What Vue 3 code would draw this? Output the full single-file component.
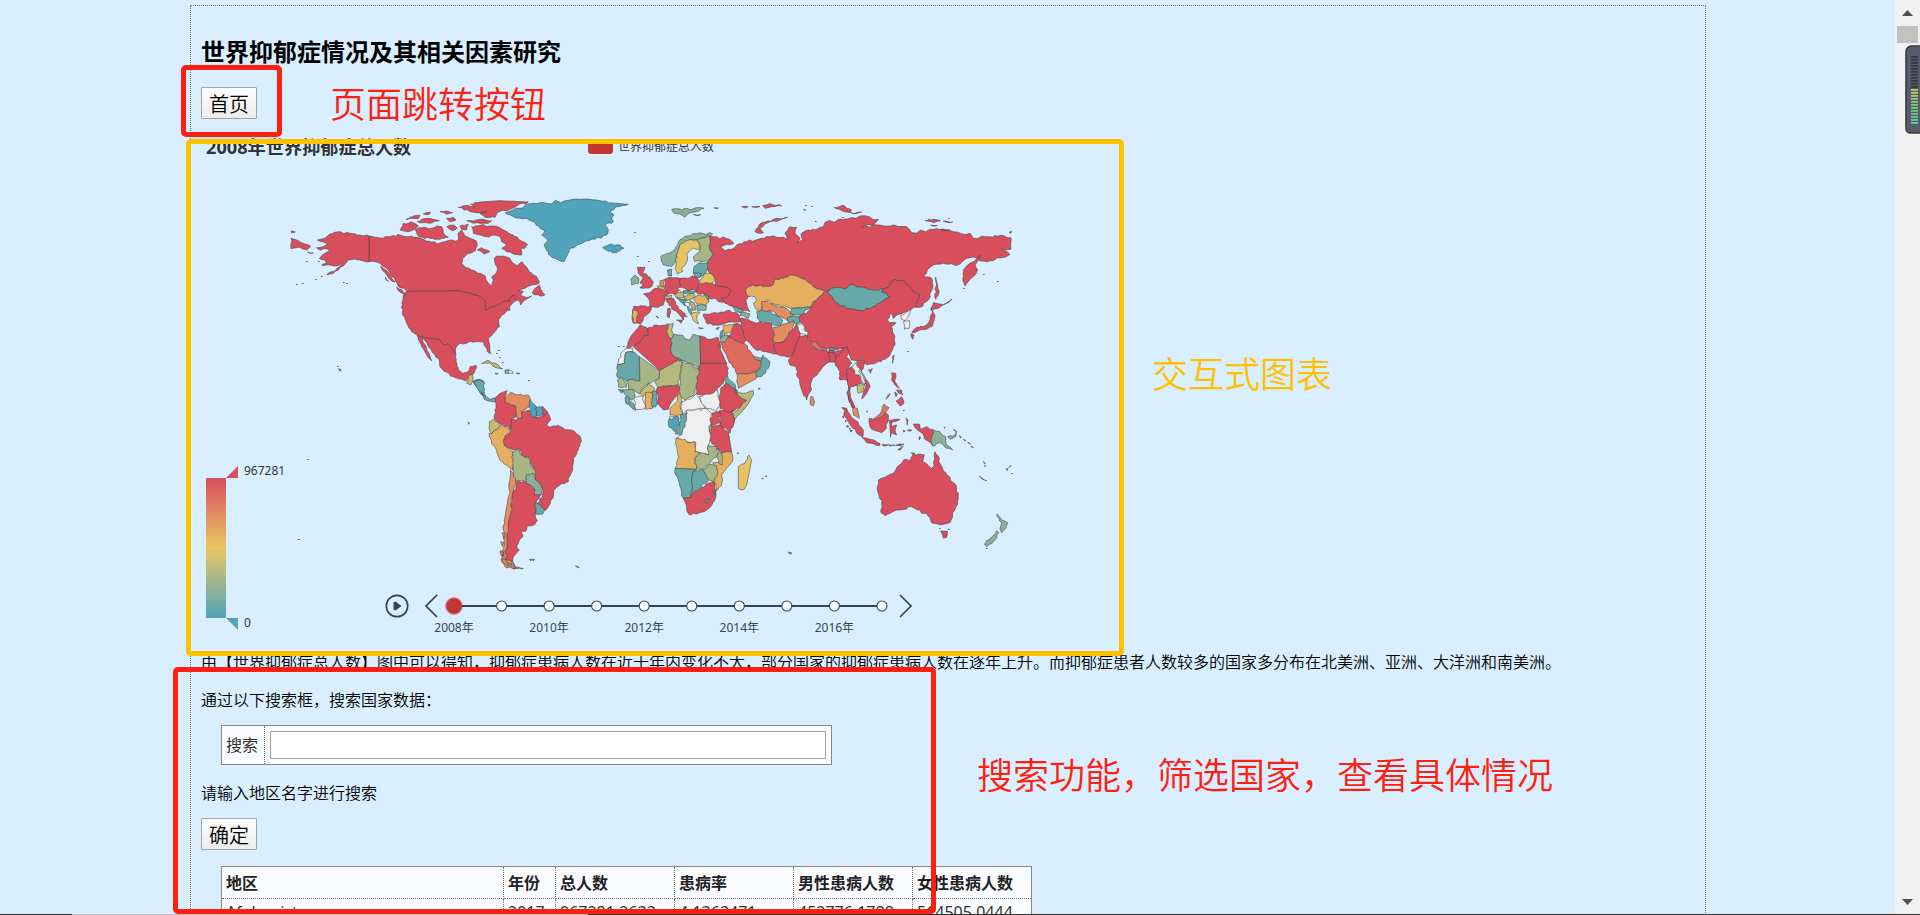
<script setup>
const R = '#d94e5d'
const T = '#50a3ba'
const W = '#eeeeee'
const OR = '#e28e5e'
const AM = '#e6ae5f'
const YE = '#e5c464'
const OL = '#c6bc70'
const SG = '#a8b685'
const GR = '#8bb099'
const TE = '#67a8a9'

// Each sheet has its own origin; coordinates are in thirds of a pixel.
const sheets = [
  { x: 280, y: 180, shapes: [
    [R, '267,168 300,174 335,168 360,165 378,170 395,168 420,175 440,184 465,185 470,192 490,186 510,180 528,184 536,178 534,160 545,150 555,168 570,175 588,182 592,196 586,212 575,218 560,222 548,235 545,250 556,262 575,270 600,280 616,288 622,305 635,318 640,300 635,290 650,278 652,262 645,250 643,235 650,228 670,228 690,235 700,250 712,258 726,245 740,262 748,275 770,290 778,305 775,312 755,315 735,325 715,332 730,334 722,345 745,352 755,348 735,360 722,375 718,362 705,358 704,348 695,347 688,362 668,366 655,374 640,380 618,391 614,360 600,350 575,342 545,333 380,334 372,325 355,320 345,300 330,278 315,262 300,250 285,245 267,245'],
    [R, '267,168 240,165 210,160 175,155 150,162 135,175 112,180 130,186 145,192 130,200 110,203 115,208 145,208 148,215 125,228 118,235 135,240 140,250 125,255 150,255 170,258 185,250 168,270 140,285 160,280 190,258 205,240 222,237 240,240 267,245'],
    [R, '380,334 545,333 575,342 600,350 614,360 618,391 640,380 655,374 668,366 688,362 695,347 704,348 708,362 690,378 690,390 665,405 655,420 658,440 640,460 625,475 628,490 632,522 622,515 612,488 598,485 580,487 570,484 560,490 540,490 528,502 527,520 515,505 505,492 492,495 478,478 455,475 430,472 412,466 395,455 380,430 368,405 367,375 370,345'],
    [R, '412,466 430,472 455,475 478,478 492,495 505,492 515,505 527,520 528,545 535,570 548,580 565,575 570,560 588,556 590,562 582,580 575,584 565,590 560,602 545,598 520,590 490,572 480,560 478,540 460,520 445,500 435,482 428,475 440,510 455,542 440,525 425,500 415,480'],
    [OL, '560,610 568,585 578,584 578,600 572,615'],
    [TE, '578,604 600,598 612,605 608,640 618,655 600,640 590,620'],
    [R, '575,140 600,136 640,138 670,150 700,165 720,180 743,193 735,205 722,205 725,225 700,222 680,215 665,205 680,195 665,185 660,170 640,165 625,172 600,165 580,160'],
    [R, '405,148 430,142 455,145 470,138 485,140 490,160 505,172 480,178 450,175 420,172 410,160'],
    [R, '360,150 370,130 400,128 415,138 400,150 380,155'],
    [R, '535,82 560,76 585,82 572,72 600,66 660,62 745,66 710,78 690,88 650,100 645,112 615,112 600,100 620,95 590,98 570,95'],
    [R, '560,122 600,118 635,122 625,130 580,130'],
    [R, '378,118 400,108 420,106 415,116'],
    [R, '412,125 440,115 460,118 478,122 450,130'],
    [R, '480,95 500,93 518,98 500,103'],
    [R, '430,102 452,97 448,103'],
    [R, '500,140 520,135 532,145 518,152'],
    [R, '540,138 565,133 560,150 545,148'],
    [R, '500,115 520,112 528,120 510,125'],
    [R, '592,210 605,203 630,215 612,222'],
    [R, '757,340 765,325 778,315 782,328 795,345 780,348'],
    [R, '33,175 55,182 75,192 92,198 80,210 55,202 33,206'],
    [R, '33,153 46,156 35,159'],
    [T, '676,98 720,85 745,72 800,70 855,62 900,58 950,60 985,68 1045,73 1010,80 990,95 1002,105 995,115 1000,125 975,135 985,150 980,165 945,178 920,182 900,192 870,205 862,225 852,245 835,240 815,232 800,212 792,195 805,180 785,165 795,152 780,145 760,125 740,115 700,110'],
    [T, '968,203 985,195 1020,195 1032,205 1010,218 985,214'],
    [OL, '605,550 620,542 645,550 668,566 645,562 630,548'],
    [GR, '675,570 686,569 686,580 675,580'],
    [W, '686,569 699,576 698,581 686,580'],
    [R, '302,258 318,270 330,285 345,305 338,305 322,288 308,272'],
    [R, '316,292 326,304 318,300'], [R, '350,322 366,330 378,346 362,338'],
    [R, '82,216 100,219 90,220'], [R, '176,566 184,570 179,574'],
    [TE, '645,580 655,580 650,583'], [TE, '709,579 720,580 712,583'],
  ] },
  { x: 450, y: 370, shapes: [
    [TE, '72,35 88,30 104,38 102,65 108,80 92,66 78,48'],
    [TE, '94,66 108,80 122,88 136,84 138,95 120,94 103,88'],
    [R, '135,85 150,70 172,62 165,85 170,100 197,108 200,140 183,148 185,178 160,165 135,150 132,140 138,115'],
    [OR, '165,85 180,68 205,74 235,75 242,92 238,110 215,125 215,145 203,147 198,125 197,108 170,100'],
    [R, '183,148 200,150 203,147 215,145 215,125 238,120 245,140 262,142 280,138 292,125 302,150 290,165 300,172 325,165 345,180 370,182 390,198 394,215 385,240 370,265 368,300 355,335 330,345 312,360 310,380 298,405 285,422 262,400 278,375 275,350 258,335 255,300 240,280 238,265 215,255 208,235 188,240 165,228 160,210 165,198 180,190 185,178'],
    [T, '240,90 255,105 262,120 258,142 245,140 238,112'],
    [T, '258,112 278,110 278,135 262,138'],
    [R, '278,110 292,125 280,138'],
    [OL, '118,155 130,148 152,160 148,172 125,192 117,175'],
    [AM, '117,190 125,192 148,172 155,165 180,178 180,190 165,198 160,210 165,228 182,240 190,250 188,300 170,285 150,270 140,240 118,200'],
    [SG, '188,245 208,237 212,255 240,268 240,285 256,300 256,315 230,315 228,330 195,335 190,310'],
    [R, '200,335 228,335 255,358 253,374 275,372 258,398 255,432 262,452 255,463 232,468 228,484 214,484 220,498 208,510 200,530 208,540 190,560 188,575 165,570 172,520 175,470 182,430 185,380'],
    [GR, '230,315 250,310 256,330 275,350 272,375 253,374 255,358 230,340'],
    [TE, '258,398 283,418 278,432 255,432'],
    [OR, '181,300 190,310 198,340 186,380 182,430 175,470 172,520 165,570 158,558 162,510 160,480 165,440 175,380 180,330'],
    [OR, '158,545 165,570 185,572 192,598 165,590 155,575'],
    [OR, '156,488 166,490 163,505'], [OR, '152,515 162,518 158,530'], [OR, '150,542 160,545 156,560'],
    [OR, '155,565 170,572 175,588 160,578'], [OR, '172,578 185,582 183,590'],
    [R, '188,575 196,590 210,594 192,596'],
    [GR, '238,568 246,568 243,573'], [GR, '247,567 254,569 249,573'], [GR, '376,588 388,592 383,593'],
    [OL, '54,156 59,159 56,163'], [GR, '210,594 220,595 213,597'],
  ] },
  { x: 600, y: 190, shapes: [
    [R, '330,138 350,140 390,148 402,160 375,165 362,170 375,182 395,178 410,165 440,155 475,148 510,140 550,142 562,148 555,130 570,110 590,112 585,130 600,145 590,160 608,150 603,132 625,120 650,118 670,110 675,97 730,88 780,78 835,88 825,100 785,113 835,105 870,108 920,110 935,128 990,118 1030,117 1060,125 1110,130 1120,145 1170,140 1200,136 1233,143 1233,178 1205,178 1230,193 1180,212 1140,213 1128,203 1100,205 1080,222 1030,220 1000,225 970,258 995,265 998,295 985,330 960,352 945,352 960,315 940,305 915,275 885,268 865,292 850,297 820,302 790,292 750,283 740,295 710,292 680,303 660,298 640,290 615,268 575,255 550,265 525,268 520,285 490,290 460,285 436,298 445,320 438,330 450,365 425,358 400,350 375,340 365,325 393,300 370,290 345,285 345,265 330,250 322,235 322,215 340,195 330,180'],
    [GR, '182,200 205,190 225,178 235,155 260,138 300,128 338,132 325,142 295,150 270,150 245,165 232,190 228,215 215,230 190,225'],
    [YE, '228,215 232,190 240,165 262,152 290,148 300,165 300,178 280,175 260,190 262,212 245,235 248,245 232,252 225,235'],
    [SG, '290,150 325,135 330,180 340,195 320,212 285,215 280,200 300,180 300,165'],
    [YE, '300,270 315,250 335,252 345,270 335,280 300,282'],
    [TE, '282,230 295,220 322,218 322,240 315,250 300,262 280,250'],
    [TE, '280,248 305,250 300,262 286,262'],
    [R, '290,290 310,280 345,285 370,290 393,300 385,318 365,325 375,335 355,335 345,325 325,325 320,312 295,312 285,300'],
    [R, '240,265 290,262 298,275 290,302 260,300 240,290'],
    [R, '195,268 210,262 240,265 240,290 230,310 205,312 193,295'],
    [TE, '202,240 215,238 215,258 205,258'],
    [R, '130,312 150,308 165,295 178,292 193,300 205,312 195,325 190,345 175,352 150,350 148,330'],
    [YE, '172,288 190,292 186,300'], [OR, '180,272 194,268 192,290 180,286'],
    [W, '228,292 245,292 262,300 245,308'],
    [OL, '195,318 215,315 212,328 193,326'],
    [OL, '222,310 250,306 252,322 228,322'],
    [TE, '250,302 288,304 280,312 254,312'],
    [OL, '252,318 280,310 286,320 270,330 254,328'],
    [AM, '278,325 295,315 320,318 328,335 315,345 290,342'],
    [TE, '312,312 325,318 326,330'],
    [GR, '290,345 320,345 318,360 293,362'],
    [SG, '270,332 282,338 288,360 276,362'],
    [W, '250,336 268,338 266,352 252,346'],
    [T, '230,323 252,328 262,332 250,334 256,346 240,334'],
    [TE, '262,350 272,356 275,375 268,368'],
    [YE, '272,372 300,366 290,378 295,402 280,392'],
    [R, '197,328 220,325 228,345 245,362 262,380 252,378 250,390 245,382 220,360 205,340'],
    [R, '230,390 248,390 243,400'], [R, '203,356 210,355 209,382 203,382'],
    [R, '102,348 130,348 155,352 152,362 135,378 122,402 100,400 98,360'],
    [AM, '98,360 112,362 110,398 98,396'],
    [R, '310,372 345,368 380,362 415,372 422,395 375,400 345,405 318,398'],
    [TE, '398,350 430,360 426,370 405,362'], [GR, '426,366 450,372 445,385 420,376'],
    [R, '112,232 135,232 128,248 150,262 160,275 155,290 120,294 132,285 120,278 130,262 115,250'],
    [GR, '92,268 105,255 117,265 115,280 95,285'],
    [AM, '436,298 460,285 490,290 520,285 525,268 550,265 575,255 615,268 640,290 660,298 675,305 655,325 640,335 635,350 580,355 560,350 530,345 500,330 487,340 485,362 470,360 460,340 470,330 465,320 445,320'],
    [TE, '680,303 710,292 740,295 750,283 790,292 820,302 850,297 845,305 872,320 845,335 820,350 780,362 740,355 705,335 695,318'],
    [R, '675,305 680,303 695,318 705,335 740,355 780,362 820,350 845,335 872,320 845,305 850,297 865,292 885,268 915,275 940,305 960,315 945,350 930,358 905,372 890,375 880,385 875,370 860,390 870,398 888,398 873,410 885,440 885,465 872,490 855,508 830,518 815,522 800,525 790,512 770,512 755,510 745,480 740,470 710,480 685,475 660,475 635,455 620,435 615,410 597,392 600,375 620,370 635,350 640,335 655,325'],
    [R, '92,440 105,425 120,405 142,415 145,435 105,465 80,473'],
    [R, '145,435 142,415 170,405 203,402 205,430 215,450 215,490 245,510 180,542 100,470 105,465'],
    [OL, '203,402 220,400 215,420 222,435 212,448 202,430'],
    [GR, '222,432 240,435 270,450 280,432 300,438 302,535 245,510 215,490 212,450'],
    [R, '300,438 330,448 355,443 362,475 355,465 380,520 302,520'],
    [W, '52,525 62,490 80,475 98,475 98,485 78,487 75,520'],
    [TE, '52,525 75,520 78,487 98,485 118,500 120,572 80,572 65,565 52,562'],
    [SG, '118,500 178,542 178,565 150,580 130,590 120,612 100,600 85,598 80,572 120,572'],
    ['#b5b97c', '178,542 235,510 247,520 240,560 235,585 205,588 175,592 165,575 178,565'],
    [SG, '245,510 298,535 295,570 285,610 255,630 238,615 240,560'],
    [R, '302,520 380,520 385,550 370,580 350,600 335,610 290,612 292,575'],
    ['#dd6a5c', '363,455 385,440 405,450 435,462 455,490 465,505 482,510 480,535 450,550 412,555 405,535 385,510 370,480'],
    [OR, '412,555 450,550 468,545 470,565 415,595'],
    [TE, '485,505 492,500 510,515 505,535 485,560 470,560 468,545 482,535'],
    [GR, '460,500 482,505 490,495 484,512 466,508'],
    [R, '403,402 418,402 440,445 430,460 405,450 385,440 395,425'],
    [AM, '372,405 403,402 395,425 372,435'],
    [GR, '362,440 385,435 375,455 362,458'], [TE, '362,425 368,420 366,440 360,445'],
    [R, '418,385 430,385 450,392 470,400 480,395 515,398 522,430 520,455 530,492 495,485 465,478 450,460 435,445 425,415'],
    [TE, '470,365 490,358 510,362 548,390 540,410 515,400 480,395 472,385'],
    [OR, '485,335 505,335 535,350 560,355 575,372 590,368 562,392 540,380 510,362 487,362'],
    [TE, '575,355 635,352 600,375 570,372'], [TE, '562,384 595,378 600,398 565,398'],
    [OR, '520,412 550,402 565,398 582,392 578,420 550,455 522,458'],
    [R, '522,460 550,455 578,420 590,400 600,430 600,455 585,480 575,500 530,492'],
    [R, '600,440 620,435 632,455 635,465 650,478 685,485 690,475 705,485 740,472 735,485 720,500 705,515 690,515 675,525 655,548 635,572 632,605 620,630 605,600 592,560 588,530 570,525 565,510 575,500 585,480'],
    [W, '590,405 605,402 614,412 612,420 625,425 622,437 600,430'],
    ['#dd765c', '635,455 680,475 680,485 650,478'],
    [T, '688,473 705,474 703,482 688,482'],
    [OR, '632,620 638,620 644,636 640,647 632,645'],
    [R, '465,125 485,98 520,88 563,82 540,90 500,100 480,115 490,128 475,130'],
    [GR, '215,58 245,60 260,55 312,55 290,65 270,68 255,82 240,72 220,68'],
    [GR, '280,73 302,74 290,77'], [R, '342,53 355,54 348,56'],
    [R, '425,50 445,50 436,54'], [R, '455,50 480,49 470,53'], [R, '488,46 510,41 545,48 515,50 495,55'],
    [TE, '348,415 358,412 352,420'], [GR, '295,413 310,415 300,417'],
    [R, '475,595 481,596 476,598'],
  ] },
  { x: 600, y: 360, shapes: [
    [SG, '52,60 65,52 80,70 80,82 55,80'], [T, '55,88 72,90 64,100'],
    [GR, '68,90 100,88 105,110 95,120 80,110'],
    [TE, '75,112 84,108 90,120 84,134 76,128'], [TE, '85,130 92,124 106,140 107,151 96,145'],
    [W, '105,110 130,108 135,145 108,148'],
    [OL, '120,100 145,68 165,88 155,98 130,108'],
    [AM, '136,98 155,97 157,145 137,148'],
    [TE, '157,95 172,92 168,140 158,142'],
    [R, '172,82 205,78 235,76 240,90 220,120 205,148 190,150 172,132'],
    [AM, '240,98 245,115 240,135 248,165 210,165 210,145 225,130'],
    [W, '245,125 270,118 290,100 310,130 315,145 285,150 262,150 248,162 243,140'],
    [W, '298,110 330,103 352,90 360,130 350,155 320,145 305,130'],
    [R, '362,85 378,68 410,90 415,108 440,122 420,145 385,158 360,145 358,120'],
    [TE, '374,60 382,45 408,85 400,85 378,68'],
    ['#b5b97c', '410,95 430,100 460,92 460,105 430,150 400,195 400,160 440,122 415,108'],
    [R, '360,150 385,158 400,150 400,195 390,220 360,195'],
    [R, '335,160 358,155 362,190 332,195'],
    [R, '333,198 360,195 385,215 395,275 365,278 345,260 330,240'],
    [W, '262,150 285,150 320,146 335,160 330,200 330,240 325,255 325,285 300,278 285,275 285,245 255,245 228,235 245,220 255,180'],
    [SG, '327,198 336,196 334,218 328,216'],
    [T, '208,175 235,170 240,195 225,215 205,195'], [W, '209,170 220,170 220,177 209,177'],
    [TE, '240,165 262,158 255,190 245,225 226,222 240,200'],
    [AM, '228,235 255,238 262,248 283,245 285,275 300,278 285,295 290,328 225,325 235,290'],
    [SG, '285,292 305,278 325,285 325,255 352,260 350,290 325,315 310,328 290,325'],
    [AM, '362,278 395,275 397,305 365,345 365,375 348,392 345,360 352,325 338,308 365,305'],
    [SG, '352,265 360,275 368,315 358,312'],
    [SG, '308,330 330,312 350,318 350,350 340,365 320,358'],
    [TE, '225,325 290,328 280,335 275,365 272,412 250,415 240,380'],
    [TE, '280,335 305,328 325,362 300,385 275,400 275,365'],
    [R, '250,415 272,412 275,400 300,388 325,370 342,365 348,395 345,420 320,450 295,460 268,465 260,450'],
    [T, '317,420 325,415 328,423 320,430'], [T, '338,395 347,394 345,404'],
    [YE, '447,285 455,300 440,375 430,390 415,385 415,320 435,310'],
    [TE, '404,90 412,92 408,102'], [TE, '564,576 576,579 570,583'],
    [R, '485,355 489,355 487,358'], [R, '497,347 500,348 498,351'], [R, '412,278 416,280 413,282'],
  ] },
  { x: 800, y: 190, shapes: [
    [R, '102,52 130,46 140,55 155,60 150,67 125,62'], [R, '150,67 185,66 165,72'],
    [R, '375,92 400,88 422,92 400,98'], [R, '430,93 458,96 440,97'], [R, '392,105 412,107 400,109'],
    [R, '627,127 634,124 633,130'], [R, '10,59 18,60 14,61'], [R, '420,118 445,121 432,123'],
    [R, '490,240 500,228 520,215 540,195 535,210 525,225 533,240 520,260 505,275 495,288 488,265'],
    [R, '407,262 413,285 418,305 408,328 404,320 408,290'],
    [R, '400,338 430,345 415,355 393,362'],
    [R, '398,362 405,375 398,408 380,418 350,425 335,430 350,412 375,408 390,390'],
    [R, '332,432 342,435 338,448'],
    [R, '430,344 445,335 456,327 446,338'],
    [W, '302,378 335,355 328,372 315,392 305,388'], [W, '312,392 328,392 328,415 313,418'],
    [R, '277,500 283,495 278,520'], [R, '205,540 217,536 212,550'],
    [R, '85,487 105,490 108,515 88,515'],
    [R, '140,468 148,490 140,500 155,520 140,545 145,570 150,620 145,615 140,570 120,570 120,545 105,520 110,500 130,475'],
    [R, '140,540 155,530 165,550 180,560 185,580 170,585 160,590 152,590 150,620 165,650 155,650 145,620 143,570'],
    [R, '170,515 195,515 190,535 182,545 200,570 210,590 200,610 185,627 190,610 197,590 195,565 178,535'],
    [W, '155,530 168,518 172,530 180,536 176,546 190,560 197,580 188,582 180,555 165,554 164,542'],
    [OL, '168,585 195,582 190,605 175,610'],
    [R, '275,548 287,550 285,575 298,595 285,585 275,570'],
    [R, '290,600 305,600 308,615 296,610'], [R, '284,606 292,612 288,620'], [R, '288,634 305,620 312,640 300,648'],
    [R, '258,628 270,610 262,624'],
  ] },
  { x: 820, y: 340, shapes: [
    [OR, '98,200 112,205 118,235 100,225'],
    [R, '84,165 96,195 104,202 98,204 86,180'],
    [R, '65,203 80,205 105,240 130,270 128,292 110,280 85,245'],
    [R, '127,293 150,298 180,310 180,316 140,308'],
    [R, '148,235 165,240 190,215 205,225 205,240 195,270 185,278 155,268'],
    ['#dd765c', '162,235 185,212 192,192 207,203 198,215 185,230 165,240'],
    [R, '208,240 240,238 215,248 215,260 230,255 225,270 230,285 215,278 212,292'],
    [R, '280,252 298,252 300,268 320,260 338,270 338,318 318,300 305,278 290,268'],
    [GR, '338,268 360,275 378,295 378,310 398,330 375,322 360,308 338,318'],
    [GR, '383,290 400,288 410,275 408,288 390,298'], [GR, '400,268 410,275 404,273'],
    [R, '186,313 204,315 190,318'], [R, '205,314 226,316 210,318'], [R, '228,315 252,312 240,318'], [R, '233,329 250,318 242,330'],
    [R, '258,234 264,240 262,255'], [R, '262,270 276,271 268,274'], [R, '250,271 256,273 251,276'], [R, '297,290 302,292 298,300'],
    [R, '68,228 72,232 69,234'], [R, '76,240 80,244 77,246'], [R, '82,256 87,260 83,262'], [R, '90,268 96,275 92,275'],
    [R, '175,420 195,412 220,400 235,378 255,358 270,362 280,342 313,345 308,365 335,385 342,378 345,335 352,345 360,370 372,395 390,412 410,445 415,475 405,510 390,548 365,555 335,548 320,520 305,520 300,510 275,500 240,510 210,520 195,527 183,518 185,490 175,460 172,440'],
    [R, '362,573 382,573 380,592 370,595'], [R, '274,338 284,340 278,343'],
    [GR, '530,522 545,540 563,548 558,565 545,578 540,565 545,548'],
    [GR, '530,572 537,578 520,605 500,620 493,612 510,595'],
    [GR, '419,286 424,294 421,293'], [GR, '430,297 438,302 434,303'], [GR, '443,306 453,312 448,312'], [GR, '453,318 460,322 456,323'],
    [GR, '478,408 494,420 486,417'], [TE, '490,364 496,370 493,371'], [TE, '558,386 564,386 562,392'], [TE, '566,382 574,377 568,380'],
    [GR, '494,376 497,377 495,380'], [TE, '372,262 376,263 373,265'], [R, '140,213 144,215 141,217'],
  ] },
]

// Midpoint displacement gives coasts and borders an irregular edge. The offset
// depends only on the segment's ends, so neighbours share the same line.
function roughen(points) {
  const p = points.split(' ').map((s) => s.split(',').map(Number))
  const out = []
  for (let i = 0; i < p.length; i++) {
    const a = p[i]
    const b = p[(i + 1) % p.length]
    out.push(a.join(','))
    const forward = a[0] < b[0] || (a[0] === b[0] && a[1] < b[1])
    const [s, e] = forward ? [a, b] : [b, a]
    const dx = e[0] - s[0]
    const dy = e[1] - s[1]
    const len = Math.hypot(dx, dy)
    if (len < 12 || len > 60) continue
    const n = len > 24 ? 3 : 1
    const mids = []
    for (let k = 1; k <= n; k++) {
      const t = k / (n + 1)
      const h = Math.sin(s[0] * 12.9 + s[1] * 78.2 + e[0] * 3.7 + e[1] * 9.1 + k * 41) * 4375.5
      const o = ((h - Math.floor(h)) - 0.5) * 0.2
      mids.push(`${(s[0] + dx * t - dy * o).toFixed(1)},${(s[1] + dy * t + dx * o).toFixed(1)}`)
    }
    out.push(...(forward ? mids : mids.reverse()))
  }
  return out.join(' ')
}

const map = sheets.map((s) => ({
  transform: `translate(${s.x} ${s.y}) scale(0.33333)`,
  shapes: s.shapes.map(([fill, pts]) => ({ fill, pts: roughen(pts) })),
}))

const specks = [
  [343, 282], [346, 283], [302, 283], [296, 284], [315, 279], [321, 276], [306, 261], [318, 261], [337, 366],
  [634, 232], [637, 256], [648, 261], [618, 346], [623, 346], [528, 380], [496, 353], [499, 357], [502, 362], [498, 350],
  [657, 317], [983, 274], [997, 281], [963, 288], [307, 459], [298, 539], [907, 351],
  [903, 410], [1011, 473], [985, 480], [986, 548], [939, 528], [948, 529],
  [805, 205], [811, 206], [815, 221], [842, 217], [948, 218], [846, 426], [849, 428], [851, 430], [656, 316],
]

const years = Array.from({ length: 10 }, (_, i) => ({ x: 454 + i * 47.55, label: i % 2 === 0 ? `${2008 + i}年` : '' }))
const headers = ['地区', '年份', '总人数', '患病率', '男性患病人数', '女性患病人数']
const row = ['Afghanistan', '2017', '967281.2633', '4.1363471', '452776.1788', '514505.0444']
const meter = Array.from({ length: 23 }, (_, i) => ({
  y: 56 + i * 3,
  color: i < 11 ? '#343843' : `hsl(${62 + (i - 11) * 9}, 50%, 60%)`,
}))
</script>

<template>
  <div class="window">
    <main class="page">
      <h1>世界抑郁症情况及其相关因素研究</h1>
      <button class="btn home">首页</button>

      <svg class="chart" viewBox="201 133 920 514" width="920" height="514">
        <defs>
          <linearGradient id="scale" x1="0" y1="0" x2="0" y2="1">
            <stop offset="0" stop-color="#d94e5d" />
            <stop offset="0.5" stop-color="#eac763" />
            <stop offset="1" stop-color="#50a3ba" />
          </linearGradient>
        </defs>
        <text class="chart-title" x="206" y="154">2008年世界抑郁症总人数</text>
        <rect x="588" y="140" width="25" height="14" rx="3.5" fill="#c23531" />
        <text class="label" x="618" y="150.5">世界抑郁症总人数</text>

        <g class="map">
          <g v-for="(s, i) in map" :key="i" :transform="s.transform">
            <polygon v-for="(p, j) in s.shapes" :key="j" :points="p.pts" :fill="p.fill" />
          </g>
          <rect v-for="(d, i) in specks" :key="'s' + i" class="speck" :x="d[0]" :y="d[1]" width="1.6" height="1" />
        </g>

        <rect x="206" y="478" width="20" height="140" fill="url(#scale)" />
        <path d="M226 478L238 466V478Z" fill="#d94e5d" />
        <path d="M226 618H238V630Z" fill="#50a3ba" />
        <text class="label" x="244" y="475">967281</text>
        <text class="label" x="244" y="627">0</text>

        <g fill="none" stroke="#304654" stroke-width="1.7">
          <circle cx="397" cy="606" r="10.7" />
          <path d="M437 595L426 606L437 617M900 595L911 606L900 617" />
          <path d="M454 606H882" stroke-width="2" />
        </g>
        <path d="M393.5 602.2L395.5 601.5L401.5 606L395.5 610.5L393.5 609.8Z" fill="#304654" />
        <g v-for="(y, i) in years" :key="y.x">
          <circle v-if="i" :cx="y.x" cy="606" r="5" fill="#fff" stroke="#304654" stroke-width="1.1" />
          <text v-if="y.label" class="label tick" :x="y.x" y="632">{{ y.label }}</text>
        </g>
        <circle cx="454" cy="606" r="7.7" fill="#c23531" stroke="#c23531" stroke-opacity="0.5" stroke-width="2.6" />
      </svg>

      <p class="summary">由【世界抑郁症总人数】图中可以得知，抑郁症患病人数在近十年内变化不大，部分国家的抑郁症患病人数在逐年上升。而抑郁症患者人数较多的国家多分布在北美洲、亚洲、大洋洲和南美洲。</p>
      <p class="hint">通过以下搜索框，搜索国家数据：</p>

      <div class="search">
        <label for="q">搜索</label>
        <div class="field"><input id="q" type="text" /></div>
      </div>
      <p class="prompt">请输入地区名字进行搜索</p>
      <button class="btn confirm">确定</button>

      <div class="table">
        <div class="cell head" v-for="h in headers" :key="h">{{ h }}</div>
        <div class="cell" v-for="c in row" :key="c">{{ c }}</div>
      </div>
    </main>

    <aside class="scrollbar">
      <svg width="25" height="915" viewBox="0 0 25 915">
        <path d="M7 16L12.5 10L18 16Z" fill="#505050" />
        <rect x="2" y="26" width="21" height="17" fill="#c1c1c1" />
        <path d="M7 899L12.5 905L18 899Z" fill="#505050" />
      </svg>
    </aside>
    <svg class="meter" width="15" height="90" viewBox="1905 45 15 90">
      <path d="M1922 46H1911Q1906 47 1906 52V128Q1906 133 1911 133H1922Z" fill="#575b6b" stroke="#383a44" stroke-width="1.6" />
      <rect v-for="m in meter" :key="m.y" x="1911" :y="m.y" width="7" height="1.8" :fill="m.color" />
    </svg>

    <div class="frame frame-nav"></div>
    <div class="frame frame-chart"></div>
    <div class="frame frame-search"></div>
    <span class="note note-nav">页面跳转按钮</span>
    <span class="note note-chart">交互式图表</span>
    <span class="note note-search">搜索功能，筛选国家，查看具体情况</span>
    <div class="edge"></div>
  </div>
</template>

<style>
body { margin: 0; overflow: hidden; }
</style>

<style scoped>
.window {
  position: relative;
  display: flex;
  justify-content: space-between;
  box-sizing: border-box;
  height: 915px;
  padding-left: 190px;
  overflow: hidden;
  background: #d9efff;
  color: #000;
  font: 16px/24px "Noto Sans", "Noto Sans CJK SC", sans-serif;
}
.page {
  box-sizing: border-box;
  width: 1516px;
  height: 1400px;
  margin-top: 5px;
  padding: 30px 10px 0;
  border: 1px dotted #777;
}
h1 { margin: 0; font-size: 24px; line-height: 32px; font-weight: 700; }
p { margin: 0; white-space: nowrap; font-family: "Noto Sans CJK SC", sans-serif; font-weight: 350; }
.btn {
  display: block;
  box-sizing: border-box;
  width: 56px;
  height: 32px;
  padding: 0;
  border: 1px solid #a3a3a3;
  border-radius: 1px;
  background: linear-gradient(#fefefe, #ececec);
  color: #000;
  font: 20px/29px "Noto Sans CJK SC", sans-serif;
  font-weight: 350;
}
.home { margin-top: 19px; }
.chart { display: block; margin-top: 14px; }
.chart-title { font-size: 18.2px; font-weight: 700; fill: #333; }
.label { font-size: 12px; fill: #333; }
.tick { text-anchor: middle; fill: #304654; }
.map polygon { stroke: #444; stroke-opacity: 0.85; stroke-width: 2; stroke-linejoin: round; }
.speck { fill: #5c5f60; }
.summary { margin-top: 2px; }
.hint { margin-top: 14px; }
.search {
  display: grid;
  grid-template-columns: 43px 1fr;
  box-sizing: border-box;
  width: 611px;
  height: 40px;
  margin: 14px 0 0 20px;
  border: 1px solid #888;
  background: #fbfcff;
  color: #333;
}
.search label { padding-left: 4px; line-height: 38px; border-right: 1px dotted #777; }
.field { padding: 5px; }
.field input { display: block; box-sizing: border-box; width: 100%; height: 28px; border: 1px solid #a5a5a5; outline: 0; background: #fff; }
.prompt { margin-top: 15px; }
.confirm { margin-top: 14px; }
.table {
  display: grid;
  grid-template-columns: 282px 52px 119px 119px 119px 118px;
  grid-auto-rows: 32px;
  width: 809px;
  margin: 16px 0 0 20px;
  border: 1px solid #888;
  background: #fbfcff;
  color: #333;
}
.cell { box-sizing: border-box; padding-left: 4px; line-height: 27px; border-right: 1px dotted #777; border-bottom: 1px dotted #777; white-space: nowrap; }
.cell:nth-child(6n) { border-right: 0; }
.cell.head { line-height: 32px; font-weight: 700; color: #222; }
.scrollbar { width: 25px; background: #f1f1f1; }
.scrollbar svg, .meter { display: block; }
.meter { position: absolute; left: 1905px; top: 45px; }
.frame { position: absolute; box-sizing: border-box; border: 5px solid #ff1e10; border-radius: 5px; }
.frame-nav { left: 181px; top: 65px; width: 101px; height: 72px; }
.frame-chart { left: 186px; top: 139px; width: 938px; height: 517px; border-color: #ffc000; }
.frame-search { left: 173px; top: 667px; width: 763px; height: 247px; }
.note { position: absolute; font: 36px/48px "Noto Sans CJK SC", sans-serif; font-weight: 350; color: #ff1e10; white-space: nowrap; }
.note-nav { left: 330px; top: 78px; }
.note-chart { left: 1152px; top: 348px; color: #ffc000; }
.note-search { left: 977px; top: 749px; }
.edge { position: absolute; left: 0; top: 914px; width: 1920px; height: 1px; background: linear-gradient(90deg, #333 72px, #bbb 72px, #bbb 588px, #333 588px); }
</style>
